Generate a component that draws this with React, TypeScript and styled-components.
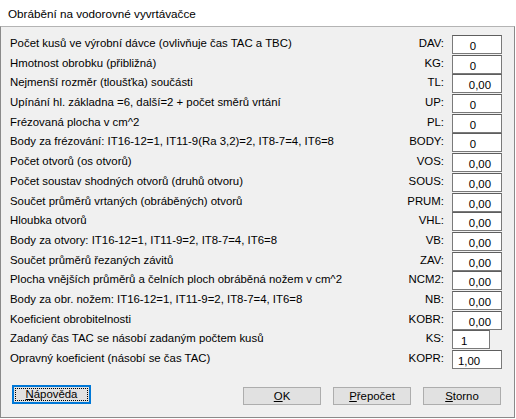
import styled, { createGlobalStyle } from "styled-components";

const GlobalStyle = createGlobalStyle`
  html, body {
    margin: 0;
    padding: 0;
    background: #ffffff;
  }
`;

const Window = styled.div`
  width: 516px;
  height: 419px;
  display: flex;
  flex-direction: column;
  font-family: "Liberation Sans", Arial, sans-serif;
  color: #000;
`;

const TitleBar = styled.div`
  height: 26px;
  flex: none;
  display: flex;
  align-items: center;
  padding-left: 8px;
  background: #ffffff;
  font-size: 11.7px;
`;

const Body = styled.div`
  flex: 1;
  display: flex;
  flex-direction: column;
  background: #f0f0f0;
  border: 1px solid #8a8a8a;
  border-top-color: #b4b4b4;
  margin: 0 1px 1px 0;
  padding: 8px 12px 0 9px;
  font-size: 11.4px;
`;

const Rows = styled.div`
  display: flex;
  flex-direction: column;
`;

const Row = styled.div`
  height: 19.7px;
  display: flex;
  align-items: flex-start;
`;

const Label = styled.div`
  flex: 1;
  line-height: 17px;
  white-space: nowrap;
`;

const Code = styled.div`
  line-height: 17px;
  margin-right: 8px;
  text-align: right;
`;

type Align = "center" | "right" | "left";

const Field = styled.div<{ $align: Align; $width?: number; $pad?: number }>`
  box-sizing: border-box;
  width: ${(p) => p.$width ?? 50}px;
  margin-right: ${(p) => 50 - (p.$width ?? 50)}px;
  height: 19px;
  background: #ffffff;
  border: 1px solid #7a7a7a;
  border-top-color: #5e5e5e;
  line-height: 20px;
  text-align: ${(p) => p.$align};
  padding: ${(p) =>
    p.$align === "center"
      ? "0 8px 0 0"
      : p.$align === "right"
      ? "0 10px 0 0"
      : `0 0 0 ${p.$pad ?? 6}px`};
`;

const Footer = styled.div`
  display: flex;
  align-items: flex-start;
  justify-content: space-between;
  margin-top: 15px;
  padding: 0 1px 0 2px;
`;

const ButtonGroup = styled.div`
  display: flex;
  gap: 12px;
  margin-top: 2px;
`;

const Button = styled.button<{ $focused?: boolean }>`
  box-sizing: border-box;
  width: ${(p) => (p.$focused ? 79 : 78)}px;
  height: ${(p) => (p.$focused ? 19 : 18)}px;
  padding: 0;
  font-family: "Liberation Sans", Arial, sans-serif;
  font-size: 11.4px;
  color: #000;
  background: #e1e1e1;
  border: 1px solid ${(p) => (p.$focused ? "#0078d7" : "#adadad")};
  box-shadow: ${(p) => (p.$focused ? "inset 0 0 0 1px #0078d7" : "none")};
  outline: ${(p) => (p.$focused ? "1px dotted #000" : "none")};
  outline-offset: -4px;
  u {
    text-decoration: underline;
    text-underline-offset: 1px;
  }
`;

type Item = {
  label: string;
  code: string;
  value: string;
  align: Align;
  width?: number;
  pad?: number;
};

const items: Item[] = [
  { label: "Počet kusů ve výrobní dávce (ovlivňuje čas TAC a TBC)", code: "DAV:", value: "0", align: "center" },
  { label: "Hmotnost obrobku (přibližná)", code: "KG:", value: "0", align: "center" },
  { label: "Nejmenší rozměr (tloušťka) součásti", code: "TL:", value: "0,00", align: "right" },
  { label: "Upínání hl. základna =6, další=2 + počet směrů vrtání", code: "UP:", value: "0", align: "center" },
  { label: "Frézovaná plocha v cm^2", code: "PL:", value: "0", align: "center" },
  { label: "Body za frézování: IT16-12=1, IT11-9(Ra 3,2)=2, IT8-7=4, IT6=8", code: "BODY:", value: "0", align: "center" },
  { label: "Počet otvorů (os otvorů)", code: "VOS:", value: "0,00", align: "right" },
  { label: "Počet soustav shodných otvorů (druhů otvoru)", code: "SOUS:", value: "0,00", align: "right" },
  { label: "Součet průměrů vrtaných (obráběných) otvorů", code: "PRUM:", value: "0,00", align: "right" },
  { label: "Hloubka otvorů", code: "VHL:", value: "0,00", align: "right" },
  { label: "Body za otvory: IT16-12=1, IT11-9=2, IT8-7=4, IT6=8", code: "VB:", value: "0,00", align: "right" },
  { label: "Součet průměrů řezaných závitů", code: "ZAV:", value: "0,00", align: "right" },
  { label: "Plocha vnějších průměrů a čelních ploch obráběná nožem v cm^2", code: "NCM2:", value: "0,00", align: "right" },
  { label: "Body za obr. nožem: IT16-12=1, IT11-9=2, IT8-7=4, IT6=8", code: "NB:", value: "0,00", align: "right" },
  { label: "Koeficient obrobitelnosti", code: "KOBR:", value: "0,00", align: "right" },
  { label: "Zadaný čas TAC se násobí zadaným počtem kusů", code: "KS:", value: "1", align: "left", width: 38, pad: 8 },
  { label: "Opravný koeficient (násobí se čas TAC)", code: "KOPR:", value: "1,00", align: "left", pad: 5 },
];

export default function App() {
  return (
    <>
      <GlobalStyle />
      <Window>
        <TitleBar>Obrábění na vodorovné vyvrtávačce</TitleBar>
        <Body>
          <Rows>
            {items.map((it) => (
              <Row key={it.code}>
                <Label>{it.label}</Label>
                <Code>{it.code}</Code>
                <Field $align={it.align} $width={it.width} $pad={it.pad}>
                  {it.value}
                </Field>
              </Row>
            ))}
          </Rows>
          <Footer>
            <Button $focused>
              <u>N</u>ápověda
            </Button>
            <ButtonGroup>
              <Button>
                <u>O</u>K
              </Button>
              <Button>
                <u>P</u>řepočet
              </Button>
              <Button>
                <u>S</u>torno
              </Button>
            </ButtonGroup>
          </Footer>
        </Body>
      </Window>
    </>
  );
}
